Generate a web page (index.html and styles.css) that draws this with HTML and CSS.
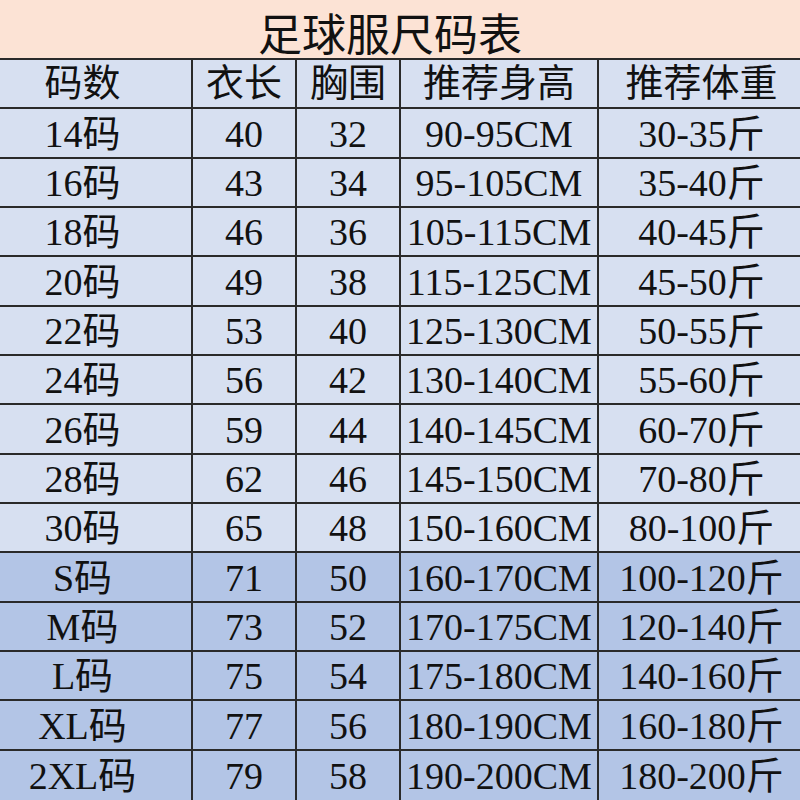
FILE: index.html
```html
<!DOCTYPE html>
<html lang="zh-CN">
<head>
<meta charset="utf-8">
<title>足球服尺码表</title>
<link rel="stylesheet" href="styles.css">
</head>
<body>
<div class="sheet">
  <div class="title"><span class="title-text">足球服尺码表</span></div>
  <div class="grid">
    <div class="cell c1 head">码数</div><div class="cell head">衣长</div><div class="cell head">胸围</div><div class="cell head">推荐身高</div><div class="cell c5 head">推荐体重</div>
    <div class="cell c1">14码</div><div class="cell">40</div><div class="cell">32</div><div class="cell">90-95CM</div><div class="cell c5">30-35斤</div>
    <div class="cell c1">16码</div><div class="cell">43</div><div class="cell">34</div><div class="cell">95-105CM</div><div class="cell c5">35-40斤</div>
    <div class="cell c1">18码</div><div class="cell">46</div><div class="cell">36</div><div class="cell">105-115CM</div><div class="cell c5">40-45斤</div>
    <div class="cell c1">20码</div><div class="cell">49</div><div class="cell">38</div><div class="cell">115-125CM</div><div class="cell c5">45-50斤</div>
    <div class="cell c1">22码</div><div class="cell">53</div><div class="cell">40</div><div class="cell">125-130CM</div><div class="cell c5">50-55斤</div>
    <div class="cell c1">24码</div><div class="cell">56</div><div class="cell">42</div><div class="cell">130-140CM</div><div class="cell c5">55-60斤</div>
    <div class="cell c1">26码</div><div class="cell">59</div><div class="cell">44</div><div class="cell">140-145CM</div><div class="cell c5">60-70斤</div>
    <div class="cell c1">28码</div><div class="cell">62</div><div class="cell">46</div><div class="cell">145-150CM</div><div class="cell c5">70-80斤</div>
    <div class="cell c1">30码</div><div class="cell">65</div><div class="cell">48</div><div class="cell">150-160CM</div><div class="cell c5">80-100斤</div>
    <div class="cell c1 adult">S码</div><div class="cell adult">71</div><div class="cell adult">50</div><div class="cell adult">160-170CM</div><div class="cell c5 adult">100-120斤</div>
    <div class="cell c1 adult">M码</div><div class="cell adult">73</div><div class="cell adult">52</div><div class="cell adult">170-175CM</div><div class="cell c5 adult">120-140斤</div>
    <div class="cell c1 adult">L码</div><div class="cell adult">75</div><div class="cell adult">54</div><div class="cell adult">175-180CM</div><div class="cell c5 adult">140-160斤</div>
    <div class="cell c1 adult">XL码</div><div class="cell adult">77</div><div class="cell adult">56</div><div class="cell adult">180-190CM</div><div class="cell c5 adult">160-180斤</div>
    <div class="cell c1 adult last">2XL码</div><div class="cell adult last">79</div><div class="cell adult last">58</div><div class="cell adult last">190-200CM</div><div class="cell c5 adult last">180-200斤</div>
  </div>
</div>
</body>
</html>
```
FILE: styles.css
```css
html, body {
  margin: 0;
  padding: 0;
  background: #d7e0f1;
}
.sheet {
  width: 800px;
  height: 800px;
  overflow: hidden;
  display: flex;
  flex-direction: column;
  font-family: "Liberation Serif", "Noto Sans CJK SC", serif;
  color: #111;
}
.title {
  height: 52px;
  padding-top: 6px;
  flex: none;
  background: #fce3d5;
  border-bottom: 2px solid #2a2a2a;
  display: flex;
  align-items: center;
  justify-content: center;
  padding-right: 20px;
}
.title-text {
  font-family: "Noto Sans CJK SC", sans-serif;
  font-size: 44px;
  line-height: 50px;
  font-weight: 400;
}
.grid {
  flex: 1;
  display: grid;
  grid-template-columns: 193px 104px 104px 198px 1fr;
  grid-template-rows: repeat(15, 1fr);
}
.cell {
  background: #d7e0f1;
  border-right: 2px solid #2a2a2a;
  border-bottom: 2px solid #2a2a2a;
  display: flex;
  align-items: center;
  justify-content: center;
  font-size: 38px;
  line-height: 1.1;
  padding-top: 3px;
  white-space: nowrap;
}
.head {
  padding-top: 1px;
}
.c1 {
  padding-right: 26px;
}
.c5 {
  border-right: none;
  padding-left: 4px;
}
.adult {
  background: #b3c5e6;
}
.last {
  border-bottom: none;
}
```
